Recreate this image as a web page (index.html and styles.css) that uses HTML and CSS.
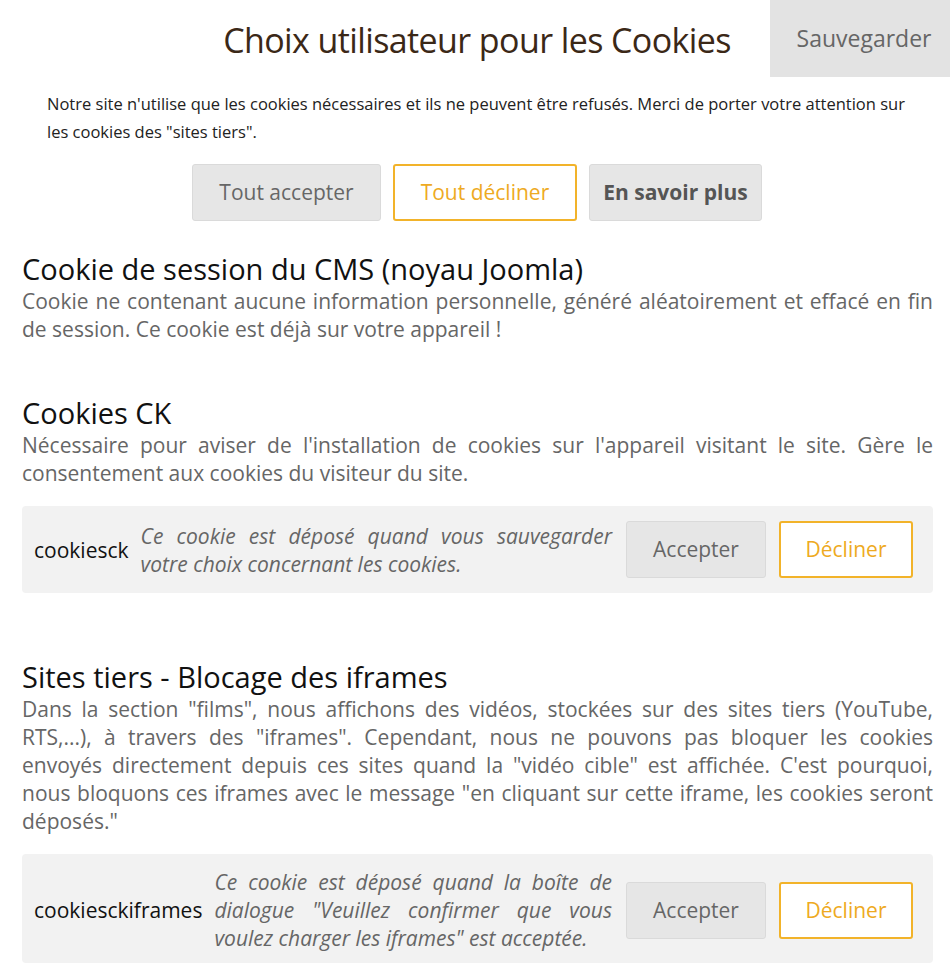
FILE: index.html
```html
<!DOCTYPE html>
<html lang="fr">
<head>
<meta charset="utf-8">
<title>Choix utilisateur pour les Cookies</title>
<link rel="stylesheet" href="styles.css">
</head>
<body>
<div class="panel">
  <header class="head">
    <h1 class="title">Choix utilisateur pour les Cookies</h1>
    <button class="save">Sauvegarder</button>
  </header>
  <p class="intro">Notre site n'utilise que les cookies nécessaires et ils ne peuvent être refusés. Merci de porter votre attention sur les cookies des "sites tiers".</p>
  <div class="actions">
    <button class="btn btn-grey">Tout accepter</button>
    <button class="btn btn-outline">Tout décliner</button>
    <button class="btn btn-grey btn-bold">En savoir plus</button>
  </div>

  <section class="cat cat-first">
    <h2 class="cat-title">Cookie de session du CMS (noyau Joomla)</h2>
    <p class="cat-desc">Cookie ne contenant aucune information personnelle, généré aléatoirement et effacé en fin de session. Ce cookie est déjà sur votre appareil !</p>
  </section>

  <section class="cat cat-second">
    <h2 class="cat-title">Cookies CK</h2>
    <p class="cat-desc">Nécessaire pour aviser de l'installation de cookies sur l'appareil visitant le site. Gère le consentement aux cookies du visiteur du site.</p>
    <div class="row">
      <span class="row-name">cookiesck</span>
      <span class="row-desc">Ce cookie est déposé quand vous sauvegarder votre choix concernant les cookies.</span>
      <button class="rbtn rbtn-accept">Accepter</button>
      <button class="rbtn rbtn-decline">Décliner</button>
    </div>
  </section>

  <section class="cat cat-third">
    <h2 class="cat-title">Sites tiers - Blocage des iframes</h2>
    <p class="cat-desc">Dans la section "films", nous affichons des vidéos, stockées sur des sites tiers (YouTube, RTS,...), à travers des "iframes". Cependant, nous ne pouvons pas bloquer les cookies envoyés directement depuis ces sites quand la "vidéo cible" est affichée. C'est pourquoi, nous bloquons ces iframes avec le message "en cliquant sur cette iframe, les cookies seront déposés."</p>
    <div class="row row-tall">
      <span class="row-name">cookiesckiframes</span>
      <span class="row-desc">Ce cookie est déposé quand la boîte de dialogue "Veuillez confirmer que vous voulez charger les iframes" est acceptée.</span>
      <button class="rbtn rbtn-accept">Accepter</button>
      <button class="rbtn rbtn-decline">Décliner</button>
    </div>
  </section>
</div>
</body>
</html>
```

FILE: styles.css
```css
html, body {
  margin: 0;
  padding: 0;
  background: #ffffff;
}

body {
  font-family: "Open Sans", "Noto Sans", "Liberation Sans", sans-serif;
  color: #222;
}

button {
  font-family: inherit;
  cursor: pointer;
}

.panel {
  width: 950px;
}

.head {
  position: relative;
  height: 76px;
}

.title {
  margin: 0;
  font-size: 34px;
  letter-spacing: -0.6px;
  font-weight: 400;
  line-height: 80px;
  text-align: center;
  color: #3b2817;
  padding-left: 4px;
}

.save {
  position: absolute;
  top: 0;
  right: 0;
  width: 180px;
  height: 77px;
  border: 0;
  background: #e3e3e3;
  color: #666;
  font-size: 23px;
  padding: 0 0 0 8px;
  line-height: 1;
}

.intro {
  margin: 14px 30px 0 47px;
  font-size: 16.5px;
  line-height: 28px;
  color: #222;
}

.actions {
  display: flex;
  justify-content: center;
  gap: 12px;
  margin-top: 18px;
  padding-left: 4px;
}

.btn {
  height: 57px;
  font-size: 21px;
  border-radius: 3px;
  padding: 0 20px;
  line-height: 1;
}

.btn-grey {
  background: #e6e6e6;
  border: 1px solid #dadada;
  color: #666;
  padding: 0 26px;
}

.btn-bold {
  font-weight: 700;
  color: #555;
  padding: 0 13px;
}

.btn-outline {
  background: #fff;
  border: 2px solid #f2b32a;
  color: #eeaa22;
  padding: 0 26px;
}

.cat {
  margin: 0 17px 0 22px;
}

.cat-first {
  margin-top: 30px;
}

.cat-second {
  margin-top: 52px;
}

.cat-third {
  margin-top: 66px;
}

.cat-title {
  margin: 0;
  font-size: 29px;
  font-weight: 400;
  line-height: 36px;
  color: #111;
}

.cat-desc {
  margin: 0;
  font-size: 21px;
  line-height: 28px;
  color: #666;
  text-align: justify;
}

.row {
  display: flex;
  align-items: center;
  margin-top: 19px;
  background: #f2f2f2;
  border-radius: 4px;
  padding: 15px 20px 15px 12px;
  min-height: 57px;
}

.row-tall {
  padding-top: 14px;
  padding-bottom: 11px;
}

.row-name {
  flex: none;
  font-size: 21px;
  color: #111;
  margin-right: 12px;
}

.row-desc {
  flex: 1;
  font-size: 21px;
  line-height: 28px;
  font-style: italic;
  color: #666;
  text-align: justify;
  margin-right: 14px;
}

.rbtn {
  flex: none;
  height: 57px;
  font-size: 21px;
  border-radius: 3px;
  line-height: 1;
}

.rbtn-accept {
  width: 140px;
  background: #e6e6e6;
  border: 1px solid #dadada;
  color: #666;
  margin-right: 13px;
}

.rbtn-decline {
  width: 134px;
  background: #fff;
  border: 2px solid #f2b32a;
  color: #eeaa22;
}
```
